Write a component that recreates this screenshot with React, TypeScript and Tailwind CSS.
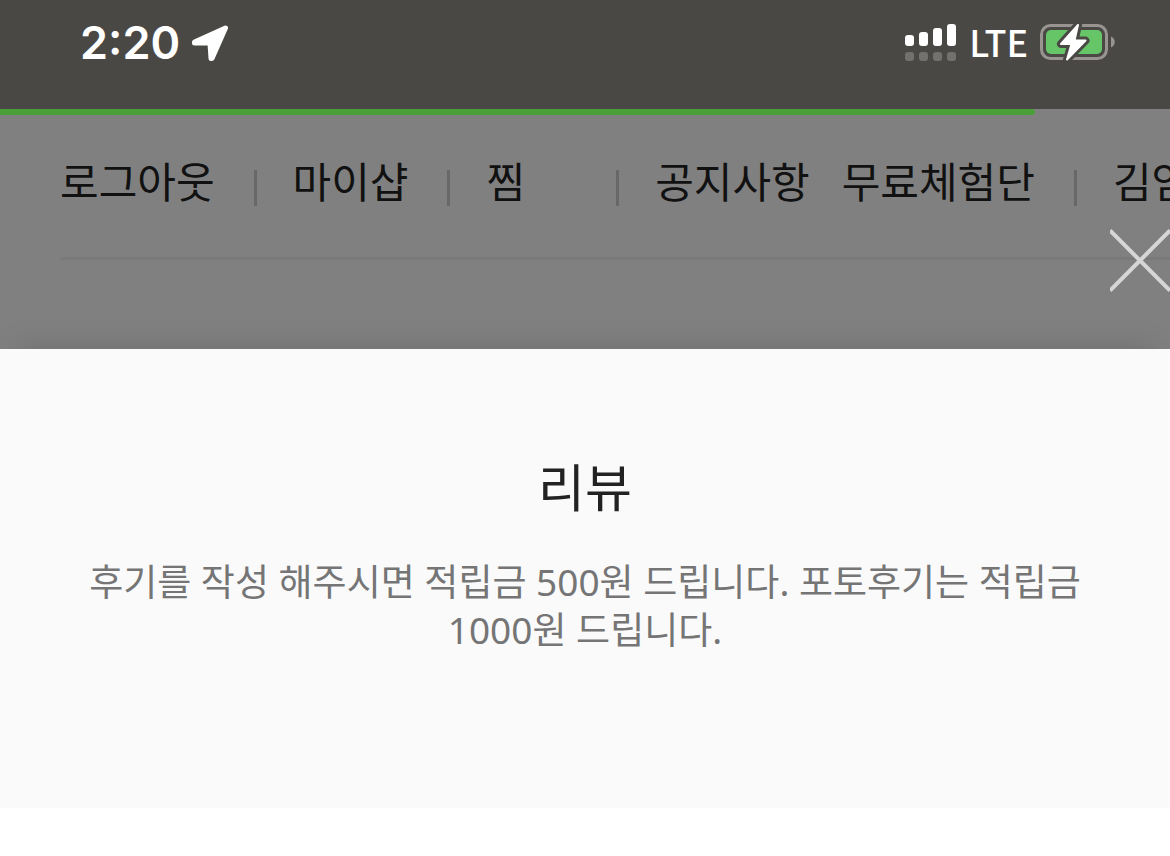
import { useState } from "react";

interface MenuItem {
  label: string;
  className: string;
  divider: boolean;
}

const menu: MenuItem[] = [
  { label: "로그아웃", className: "", divider: true },
  { label: "마이샵", className: "", divider: true },
  { label: "찜", className: "pr-[52px]", divider: true },
  { label: "공지사항", className: "pr-8", divider: false },
  { label: "무료체험단", className: "", divider: true },
  { label: "김엄", className: "", divider: false },
];

function SignalIcon() {
  return (
    <svg width="52" height="38" viewBox="0 0 52 38" aria-hidden="true">
      <g fill="#fff">
        <rect x="0" y="11" width="9" height="11" rx="3" />
        <rect x="14" y="8" width="9" height="14" rx="3" />
        <rect x="28" y="4" width="9" height="18" rx="3" />
        <rect x="42" y="0" width="9" height="22" rx="3" />
      </g>
      <g fill="#73716f">
        <rect x="0" y="28" width="9" height="9" rx="3" />
        <rect x="14" y="28" width="9" height="9" rx="3" />
        <rect x="28" y="28" width="9" height="9" rx="3" />
        <rect x="42" y="28" width="9" height="9" rx="3" />
      </g>
    </svg>
  );
}

function BatteryIcon() {
  return (
    <svg width="76" height="38" viewBox="0 0 76 38" aria-hidden="true">
      <rect x="1.5" y="1.5" width="65" height="33" rx="9" fill="none" stroke="#989492" strokeWidth="3" />
      <rect x="6" y="6" width="56" height="24" rx="5" fill="#66c667" />
      <path d="M71 12.5c5 2 5 9 0 11z" fill="#989492" />
      <path
        d="M38 1 21 20h10.500l-4.500 15.500L45.500 16.500H34.500z"
        fill="#4a4845"
        stroke="#4a4845"
        strokeWidth="8"
        strokeLinejoin="round"
      />
      <path
        d="M38 1 21 20h10.500l-4.500 15.500L45.500 16.500H34.500z"
        fill="#fff"
        stroke="#fff"
        strokeWidth="2"
        strokeLinejoin="round"
      />
    </svg>
  );
}

function StatusBar() {
  return (
    <div className="flex h-[109px] items-start justify-between bg-[#4a4845] pt-3 pr-[54px] pl-20 text-white">
      <div className="flex items-center gap-3">
        <span className="font-['Inter'] text-[45px] leading-[62px] font-semibold">2:20</span>
        <svg width="38" height="38" viewBox="0 0 38 38" aria-hidden="true">
          <path
            d="M33.500 4 2.500 18v1h15.500l1 15.500h1z"
            fill="#fff"
            stroke="#fff"
            strokeWidth="5"
            strokeLinejoin="round"
          />
        </svg>
      </div>
      <div className="flex items-center gap-3">
        <SignalIcon />
        <span className="pb-1 font-['Noto_Sans_CJK_KR',sans-serif] text-[36px] leading-[58px] font-medium">LTE</span>
        <BatteryIcon />
      </div>
    </div>
  );
}

function App() {
  const [open, setOpen] = useState(true);

  return (
    <div className="min-h-screen overflow-hidden bg-white font-['Noto_Sans_CJK_KR',sans-serif]">
      <StatusBar />

      <header className="relative h-60 bg-[#808080]">
        {/* page loading */}
        <div className="h-[6px] w-[88.5%] rounded-r-sm bg-[#4b9f38]" />
        <nav className="ml-[60px] flex h-[145px] items-start overflow-hidden border-b-3 border-[#7a7a7a] pt-[34px] text-[42px] leading-[62px] whitespace-nowrap text-[#111]">
          {menu.map((item) => (
            <div key={item.label} className="flex shrink-0 items-center">
              <a href="#" className={item.className}>
                {item.label}
              </a>
              {item.divider && (
                <span className="mt-4 mr-9 ml-[39px] h-9 w-[3px] bg-[#686868]" />
              )}
            </div>
          ))}
        </nav>
        {open && (
          <button
            type="button"
            aria-label="닫기"
            onClick={() => setOpen(false)}
            className="absolute top-[120px] right-0 cursor-pointer"
          >
            <svg width="60" height="63" viewBox="0 0 60 63" aria-hidden="true">
              <path d="M0 1.500 60 61.500M60 1.500 0 61.500" stroke="#d6d6d6" strokeWidth="4" />
            </svg>
          </button>
        )}
      </header>

      {open && (
        <section className="relative bg-[#fafafa] px-[60px] pt-[99px] pb-[154px] text-center shadow-[0_-15px_30px_-15px_rgba(0,0,0,0.15)]">
          <h1 className="text-[51px] leading-[74px] text-[#222]">리뷰</h1>
          <p className="mt-9 font-['Noto_Sans','Noto_Sans_CJK_KR',sans-serif] text-[37px] leading-12 break-keep text-[#757575]">
            후기를 작성 해주시면 적립금 500원 드립니다. 포토후기는 적립금 1000원 드립니다.
          </p>
        </section>
      )}
    </div>
  );
}

export default App;
